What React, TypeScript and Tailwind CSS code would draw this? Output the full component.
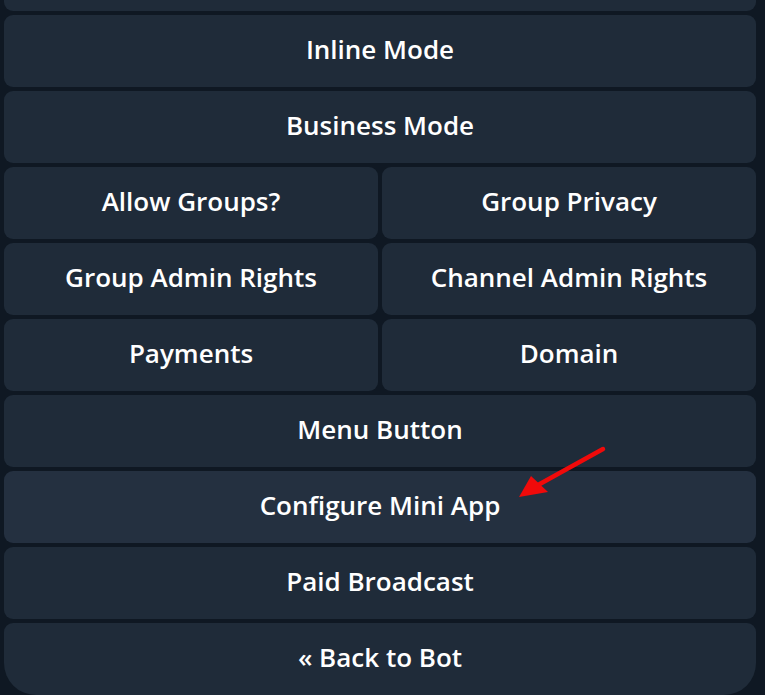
import React from "react";

function Btn({ label, className = "", hover = false }: { label?: string; className?: string; hover?: boolean }) {
  return (
    <div
      className={
        "flex h-[72px] shrink-0 items-center justify-center pb-[4px] text-[26px] font-semibold text-white " +
        (hover ? "bg-[#243040] " : "bg-[#1f2b39] ") +
        className
      }
      style={{ fontFamily: '"Open Sans", "Noto Sans", sans-serif' }}
    >
      {label}
    </div>
  );
}

export default function App() {
  return (
    <div className="relative h-[695px] w-[765px] overflow-hidden bg-[#0f1823]">
      <div className="flex flex-col gap-[4px] pl-[4px] pr-[9px] mt-[-61px]">
        <Btn className="rounded-[9px] bg-[#1c2734]" />
        <Btn label="Inline Mode" className="rounded-[9px]" />
        <Btn label="Business Mode" className="rounded-[9px]" />
        <div className="flex gap-[4px]">
          <Btn label="Allow Groups?" className="flex-1 rounded-[9px]" />
          <Btn label="Group Privacy" className="flex-1 rounded-[9px]" />
        </div>
        <div className="flex gap-[4px]">
          <Btn label="Group Admin Rights" className="flex-1 rounded-[9px]" />
          <Btn label="Channel Admin Rights" className="flex-1 rounded-[9px]" />
        </div>
        <div className="flex gap-[4px]">
          <Btn label="Payments" className="flex-1 rounded-[9px]" />
          <Btn label="Domain" className="flex-1 rounded-[9px]" />
        </div>
        <Btn label="Menu Button" className="rounded-[9px]" />
        <Btn label="Configure Mini App" className="rounded-[9px]" hover />
        <Btn label="Paid Broadcast" className="rounded-[9px]" />
        <Btn label="« Back to Bot" className="rounded-t-[9px] rounded-b-[32px]" />
      </div>
      <svg className="absolute left-0 top-0" width="765" height="695" viewBox="0 0 765 695">
        <line x1="603" y1="449" x2="538" y2="485" stroke="#f00a0a" strokeWidth="4.5" strokeLinecap="round" />
        <polygon points="519,497 531,476 548,492" fill="#f00a0a" />
      </svg>
    </div>
  );
}
